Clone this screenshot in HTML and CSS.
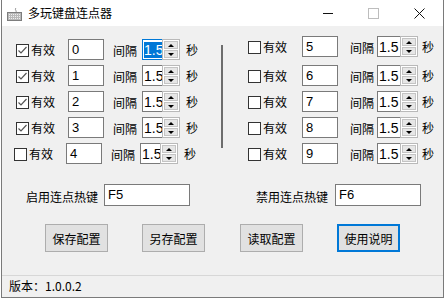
FILE: index.html
```html
<!DOCTYPE html>
<html lang="zh-CN">
<head>
  <meta charset="UTF-8" />
  <title>多玩键盘连点器</title>
  <link rel="stylesheet" href="styles.css">
</head>
<body>
  <div class="win">
    <div class="titlebar">
      <svg class="appicon" width="15" height="14" viewBox="0 0 15 14">
        <path d="M9 1 C7 3 11 4 8 6" fill="none" stroke="#8a8a8a" stroke-width="1"/>
        <rect x="0.5" y="5.5" width="14" height="8" fill="#b8b8b8" stroke="#7d7d7d"/>
        <path d="M2 7.5h11M2 9.5h11M2 11.5h11" stroke="#eeeeee" stroke-width="1" stroke-dasharray="1 1"/>
      </svg>
      <span class="title">多玩键盘连点器</span>
      <div class="controls">
        <span class="ctl min"></span>
        <span class="ctl max"></span>
        <svg class="ctl close" width="11" height="11" viewBox="0 0 11 11">
          <path d="M0.5 0.5L10.5 10.5M10.5 0.5L0.5 10.5" stroke="#111" stroke-width="1"/>
        </svg>
      </div>
    </div>

    <div class="panel">
      <div class="cols">
        <!-- 左侧 0-4 -->
        <div class="col left">
          <div class="row">
            <label class="chk"><span class="box"><svg width="11" height="11" viewBox="0 0 11 11"><path d="M1.5 5.5L4 8L9.5 2" fill="none" stroke="#555" stroke-width="1.2"/></svg></span>有效</label>
            <div class="field">0</div>
            <span class="lbl">间隔</span>
            <div class="spin focus"><span class="val"><span class="sel">1.5</span></span><span class="arrows"><i class="up"></i><i class="down"></i></span></div>
            <span class="sec">秒</span>
          </div>
          <div class="row">
            <label class="chk"><span class="box"><svg width="11" height="11" viewBox="0 0 11 11"><path d="M1.5 5.5L4 8L9.5 2" fill="none" stroke="#555" stroke-width="1.2"/></svg></span>有效</label>
            <div class="field">1</div>
            <span class="lbl">间隔</span>
            <div class="spin"><span class="val">1.5</span><span class="arrows"><i class="up"></i><i class="down"></i></span></div>
            <span class="sec">秒</span>
          </div>
          <div class="row">
            <label class="chk"><span class="box"><svg width="11" height="11" viewBox="0 0 11 11"><path d="M1.5 5.5L4 8L9.5 2" fill="none" stroke="#555" stroke-width="1.2"/></svg></span>有效</label>
            <div class="field">2</div>
            <span class="lbl">间隔</span>
            <div class="spin"><span class="val">1.5</span><span class="arrows"><i class="up"></i><i class="down"></i></span></div>
            <span class="sec">秒</span>
          </div>
          <div class="row">
            <label class="chk"><span class="box"><svg width="11" height="11" viewBox="0 0 11 11"><path d="M1.5 5.5L4 8L9.5 2" fill="none" stroke="#555" stroke-width="1.2"/></svg></span>有效</label>
            <div class="field">3</div>
            <span class="lbl">间隔</span>
            <div class="spin"><span class="val">1.5</span><span class="arrows"><i class="up"></i><i class="down"></i></span></div>
            <span class="sec">秒</span>
          </div>
          <div class="row shift">
            <label class="chk"><span class="box"></span>有效</label>
            <div class="field">4</div>
            <span class="lbl">间隔</span>
            <div class="spin"><span class="val">1.5</span><span class="arrows"><i class="up"></i><i class="down"></i></span></div>
            <span class="sec">秒</span>
          </div>
        </div>

        <div class="sep"></div>

        <!-- 右侧 5-9 -->
        <div class="col right">
          <div class="row first">
            <label class="chk"><span class="box"></span>有效</label>
            <div class="field">5</div>
            <span class="lbl">间隔</span>
            <div class="spin"><span class="val">1.5</span><span class="arrows"><i class="up"></i><i class="down"></i></span></div>
            <span class="sec">秒</span>
          </div>
          <div class="row">
            <label class="chk"><span class="box"></span>有效</label>
            <div class="field">6</div>
            <span class="lbl">间隔</span>
            <div class="spin"><span class="val">1.5</span><span class="arrows"><i class="up"></i><i class="down"></i></span></div>
            <span class="sec">秒</span>
          </div>
          <div class="row">
            <label class="chk"><span class="box"></span>有效</label>
            <div class="field">7</div>
            <span class="lbl">间隔</span>
            <div class="spin"><span class="val">1.5</span><span class="arrows"><i class="up"></i><i class="down"></i></span></div>
            <span class="sec">秒</span>
          </div>
          <div class="row">
            <label class="chk"><span class="box"></span>有效</label>
            <div class="field">8</div>
            <span class="lbl">间隔</span>
            <div class="spin"><span class="val">1.5</span><span class="arrows"><i class="up"></i><i class="down"></i></span></div>
            <span class="sec">秒</span>
          </div>
          <div class="row">
            <label class="chk"><span class="box"></span>有效</label>
            <div class="field">9</div>
            <span class="lbl">间隔</span>
            <div class="spin"><span class="val">1.5</span><span class="arrows"><i class="up"></i><i class="down"></i></span></div>
            <span class="sec">秒</span>
          </div>
        </div>
      </div>

      <div class="hotkeys">
        <span class="hk-label">启用连点热键</span>
        <div class="field hk">F5</div>
        <span class="hk-label off">禁用连点热键</span>
        <div class="field hk">F6</div>
      </div>

      <div class="actions">
        <button class="btn">保存配置</button>
        <button class="btn">另存配置</button>
        <button class="btn">读取配置</button>
        <button class="btn default">使用说明</button>
      </div>
    </div>

    <div class="status">版本：1.0.0.2</div>
  </div>
</body>
</html>
```

FILE: styles.css
```css
* {
  box-sizing: border-box;
}
body {
  margin: 0;
  background: #fff;
  font-family: "Noto Sans CJK SC", "Liberation Sans", sans-serif;
  font-size: 12px;
  color: #000;
}
.win {
  margin-left: 1px;
  width: 443px;
  height: 298px;
  border: 1px solid #7a7a7a;
  border-top: none;
  background: #f0f0f0;
  display: flex;
  flex-direction: column;
}

/* title bar */
.titlebar {
  height: 26px;
  background: #fff;
  display: flex;
  align-items: center;
  padding-left: 5px;
}
.appicon {
  margin-top: 1px;
}
.title {
  margin-left: 6px;
  line-height: 14px;
}
.controls {
  margin-left: auto;
  display: flex;
  align-items: center;
}
.ctl {
  display: block;
}
.min {
  width: 10px;
  height: 1px;
  background: #111;
  margin-right: 35px;
}
.max {
  width: 11px;
  height: 11px;
  border: 1px solid #bdbdbd;
  margin-right: 35px;
}
.close {
  margin-right: 18px;
}

/* main */
.panel {
  flex: 1;
  display: flex;
  flex-direction: column;
}
.cols {
  display: flex;
}
.col {
  display: flex;
  flex-direction: column;
  gap: 5px;
  padding-top: 13px;
}
.col.left {
  width: 219px;
  padding-left: 14px;
}
.col.right {
  padding-left: 25px;
}
.row.first {
  margin-top: -3px;
  margin-bottom: 3px;
}
.sep {
  width: 2px;
  height: 103px;
  margin-top: 19px;
  background: #6d6d6d;
}
.row {
  display: flex;
  align-items: center;
  height: 21px;
}
.row.shift {
  margin-left: -2px;
}
.chk {
  display: flex;
  align-items: center;
  width: 52px;
  line-height: 14px;
  padding-top: 1px;
}
.right .chk {
  width: 54px;
}
.box {
  width: 13px;
  height: 13px;
  border: 1px solid #333;
  background: #fff;
  margin-right: 2px;
  display: flex;
  align-items: center;
  justify-content: center;
}
.box svg {
  display: block;
}
.field {
  width: 36px;
  height: 21px;
  border: 1px solid #7a7a7a;
  background: #fff;
  font-family: "Liberation Sans", sans-serif;
  font-size: 13px;
  line-height: 15px;
  padding: 2px 0 0 3px;
}
.lbl {
  margin-left: 9px;
  width: 29px;
  padding-top: 2px;
}
.right .lbl {
  margin-left: 12px;
  width: 27px;
}
.spin {
  display: flex;
  height: 21px;
}
.val {
  width: 20px;
  height: 21px;
  border: 1px solid #7a7a7a;
  border-right: none;
  background: #fff;
  font-family: "Liberation Sans", sans-serif;
  font-size: 14px;
  line-height: 16px;
  padding: 2px 0 0 1px;
  white-space: nowrap;
  overflow: hidden;
}
.right .val {
  width: 23px;
}
.spin.focus .val {
  border-color: #0078d7;
}
.sel {
  background: #0078d7;
  color: #fff;
}
.arrows {
  width: 18px;
  display: flex;
  flex-direction: column;
  border: 1px solid #b9b9b9;
  background: #fff;
  padding: 1px;
  gap: 1px;
}
.arrows i {
  flex: 1;
  background: #e6e6e6;
  border: 1px solid #c4c4c4;
  display: flex;
  align-items: center;
  justify-content: center;
}
.arrows i::after {
  content: "";
  border-left: 3px solid transparent;
  border-right: 3px solid transparent;
}
.up::after {
  border-bottom: 3px solid #000;
}
.down::after {
  border-top: 3px solid #000;
}
.sec {
  margin-left: 6px;
  padding-bottom: 1px;
}
.right .sec {
  margin-left: 4px;
}

/* hotkeys */
.hotkeys {
  display: flex;
  align-items: center;
  margin-top: 20px;
  padding-left: 24px;
  height: 22px;
}
.hk-label {
  width: 78px;
  padding-top: 2px;
}
.hk-label.off {
  margin-left: 66px;
  width: 79px;
}
.field.hk {
  width: 86px;
  height: 22px;
}

/* buttons */
.actions {
  display: flex;
  gap: 34px;
  margin-top: 18px;
  padding-left: 43px;
}
.btn {
  width: 63px;
  height: 28px;
  padding: 0;
  background: #e1e1e1;
  border: 1px solid #adadad;
  font-family: "Noto Sans CJK SC", sans-serif;
  font-size: 12px;
  color: #000;
}
.btn:nth-child(3) {
  margin-left: 1px;
}
.btn.default {
  border: 2px solid #0078d7;
}

/* status */
.status {
  height: 22px;
  border-top: 1px solid #d7d7d7;
  padding-left: 7px;
  line-height: 20px;
}
```
